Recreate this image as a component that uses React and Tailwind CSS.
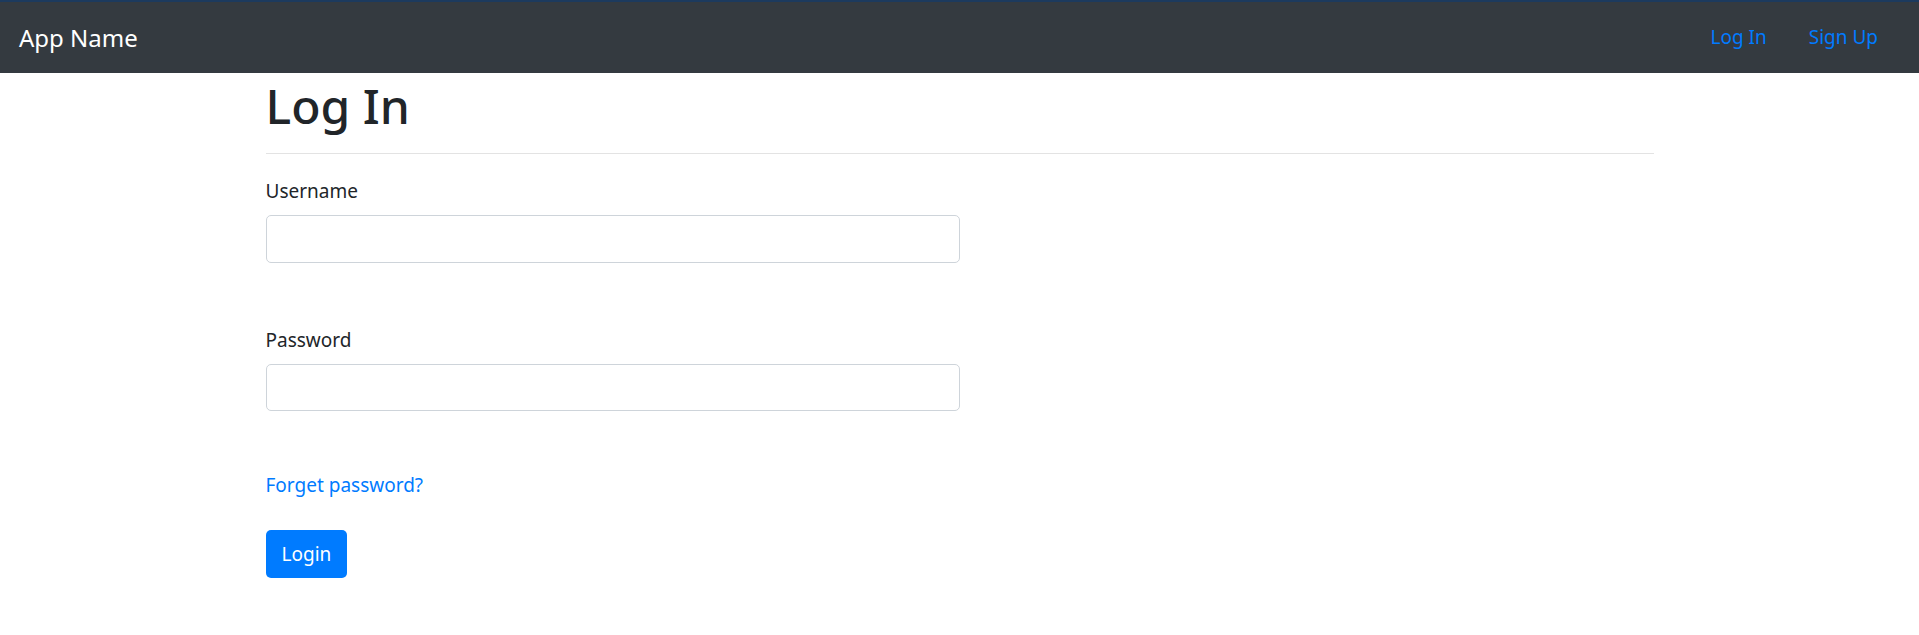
export default function App() {
  return (
    <div className="min-h-[635px] bg-white text-[#212529] font-['Noto_Sans',sans-serif]">
      {/* navbar */}
      <nav className="h-[73px] bg-[#343a40] border-t-2 border-[#1c3a5e] flex items-center justify-between pl-[19px] pr-[41px]">
        <a className="text-[24px] text-white leading-none">App Name</a>
        <div className="flex items-center gap-[42px] text-[19px] text-[#007bff]">
          <a>Log In</a>
          <a>Sign Up</a>
        </div>
      </nav>

      <div className="w-[1388px] mx-auto">
        <h1 className="text-[48px] leading-[60px] font-medium pt-[3px]">Log In</h1>
        <hr className="mt-[17px] border-t border-[#e3e3e3]" />

        <form className="w-[694px] pt-[22px]">
          <div className="mb-[62px]">
            <label className="block text-[19px] leading-[30px] mb-[9px]">Username</label>
            <input className="block w-full h-[48px] border border-[#ced4da] rounded-[5px] px-3" />
          </div>
          <div className="mb-[59px]">
            <label className="block text-[19px] leading-[30px] mb-[9px]">Password</label>
            <input type="password" className="block w-full h-[47px] border border-[#ced4da] rounded-[5px] px-3" />
          </div>
          <a className="block text-[19px] leading-[30px] text-[#007bff]">Forget password?</a>
          <button type="button" className="mt-[30px] h-[48px] px-[16px] bg-[#007bff] text-white text-[19px] rounded-[5px]">
            Login
          </button>
        </form>
      </div>
    </div>
  );
}
